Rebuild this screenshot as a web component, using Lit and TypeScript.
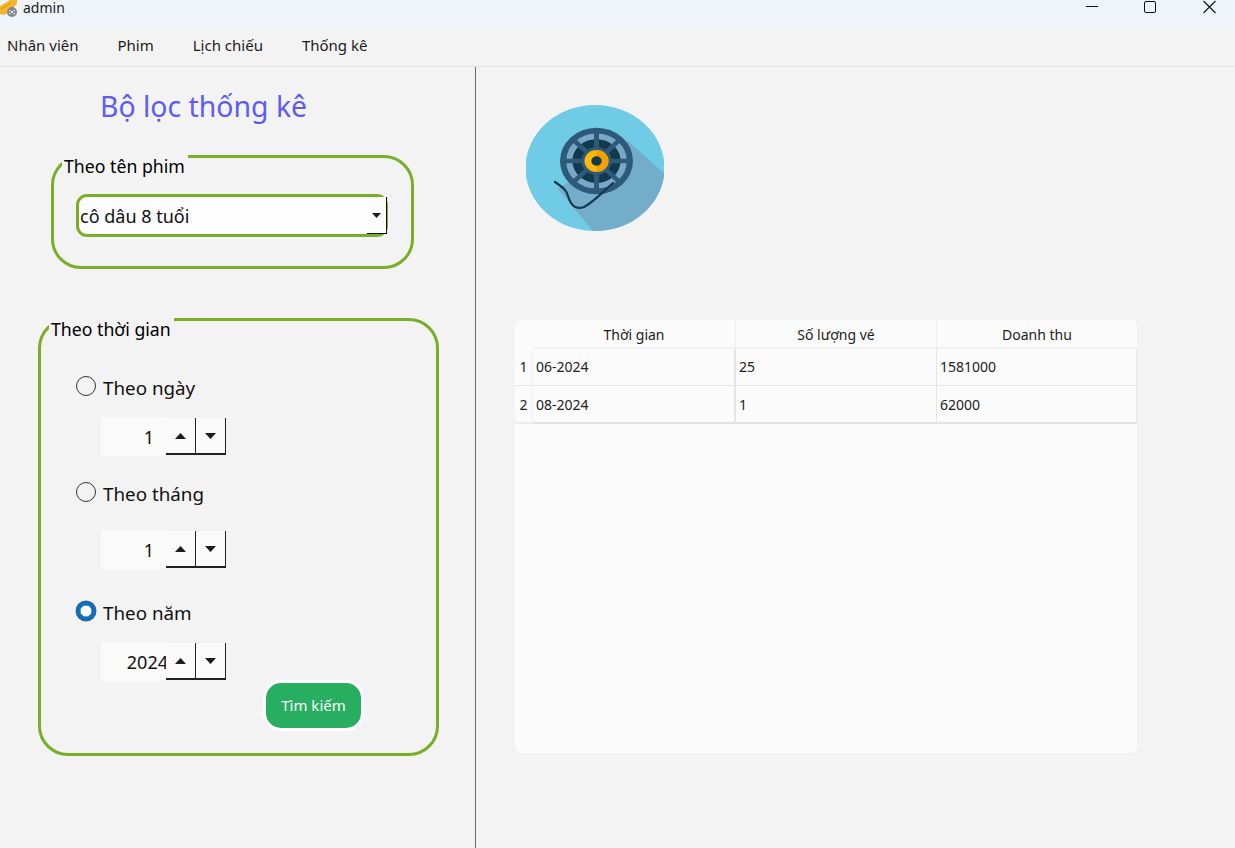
import { LitElement, html, css, svg } from "lit";
import { customElement } from "lit/decorators.js";

const spokes = [0, 45, 90, 135].map(
  (a) => svg`<line x1="-33" y1="0" x2="33" y2="0" stroke="#2d5a78" stroke-width="5" transform="rotate(${a + 0})"/>`
);

const reelIcon = html`<svg class="reel" viewBox="0 0 138 126" width="138" height="126">
  <defs>
    <clipPath id="disc"><ellipse cx="69" cy="63" rx="69.5" ry="63"/></clipPath>
  </defs>
  <ellipse cx="69" cy="63" rx="69.5" ry="63" fill="#6fcbe6"/>
  <polygon clip-path="url(#disc)" points="102,36 140,70 140,126 67,126 32,84" fill="#74adca"/>
  <g transform="translate(70.5,56) scale(1,0.91)">
    <circle r="36.5" fill="#2d5a78"/>
    <circle r="27" fill="none" stroke="#79a8c6" stroke-width="6.6"/>
    <circle r="19.5" fill="none" stroke="#12394d" stroke-width="9"/>
    ${spokes}
    <circle r="15" fill="#2d5a78"/>
    <circle r="12" fill="#ffb80c"/>
    <path d="M0,-12 A12,12 0 0 1 0,12 Z" fill="#f3a000"/>
    <circle r="5.2" fill="#12394d"/>
  </g>
  <path d="M29,77 C36,82 40,84 42,91 C45,101 50,105 58,102 C66,98 78,86 87,78" fill="none" stroke="#12394d" stroke-width="2.2" stroke-linecap="round"/>
</svg>`;

const appIcon = html`<svg class="app-icon" viewBox="0 0 18 18" width="18" height="18">
  <path d="M0,6 L10,0 L17,0 L17,4 L9,12 L4,15 L0,14 Z" fill="#f7b52e"/>
  <path d="M1,9 L11,3" stroke="#e09a1a" stroke-width="1.3"/>
  <circle cx="12" cy="12" r="5" fill="#7c868b"/>
  <circle cx="12" cy="12" r="1.2" fill="#d6dcde"/>
  <circle cx="9.8" cy="10.6" r="0.9" fill="#d6dcde"/>
  <circle cx="14.2" cy="10.6" r="0.9" fill="#d6dcde"/>
  <circle cx="9.8" cy="13.6" r="0.9" fill="#d6dcde"/>
  <circle cx="14.2" cy="13.6" r="0.9" fill="#d6dcde"/>
</svg>`;

@customElement("app-root")
export class AppRoot extends LitElement {
  static styles = css`
    :host {
      display: block;
      width: 1235px;
      height: 848px;
      overflow: hidden;
      background: #f3f3f3;
      font-family: "Noto Sans", "Open Sans", sans-serif;
      color: #111;
    }
    .titlebar {
      height: 26px;
      background: #eff4fb;
      display: flex;
      align-items: flex-start;
      font-size: 14px;
      line-height: 16px;
    }
    .app-icon { display: block; flex: none; }
    .app-name { margin-left: 5px; color: #1a1a1a; }
    .win {
      margin-left: auto;
      display: flex;
    }
    .win svg { display: block; }
    .win .min { margin-right: 46px; }
    .win .max { margin-right: 47px; }
    .win .close { margin-right: 19px; }
    .menubar {
      box-sizing: border-box;
      border-bottom: 1px solid #e2e2ea;
      height: 41px;
      display: flex;
      align-items: center;
      font-size: 15px;
      color: #1b1b1b;
      padding: 0 0 2px 7px;
    }
    .menubar span { margin-right: 39px; }
    .main { display: flex; height: 781px; }
    .left {
      width: 476px;
      box-sizing: border-box;
      border-right: 1px solid #6a6a6a;
      flex: none;
    }
    .heading {
      margin: 20px 0 0 100px;
      height: 40px;
      line-height: 38px;
      font-size: 28.4px;
      font-weight: 400;
      color: #5e5cf6;
    }
    .group {
      box-sizing: border-box;
      border: 3px solid #79ae28;
      border-radius: 30px;
    }
    .g1 { margin: 28px 0 0 51px; width: 363px; height: 114px; }
    .g2 { margin: 49px 0 0 38px; width: 401px; height: 438px; }
    .legend {
      width: fit-content;
      height: 24px;
      margin: -4px 0 0 8px;
      padding: 0 3px 0 2px;
      background: #f3f3f3;
      font-size: 17.7px;
      line-height: 24px;
      color: #000;
    }
    .combo {
      box-sizing: border-box;
      margin: 16px 0 0 22px;
      width: 312px;
      height: 43px;
      border: 3px solid #79ae28;
      border-radius: 11px;
      background: #fdfdfd;
      display: flex;
      align-items: center;
      font-size: 18px;
      padding-left: 1px;
    }
    .combo .arrowbox {
      margin-left: auto;
      align-self: stretch;
      width: 20px;
      margin-right: -2px;
      box-sizing: border-box;
      border-right: 1.5px solid #111;
      border-bottom: 1.5px solid #111;
      background: #fdfdfd;
      display: flex;
      align-items: center;
      justify-content: center;
    }
    .radio {
      display: flex;
      align-items: center;
      height: 24px;
      margin-left: 35px;
      font-size: 18.8px;
      color: #111;
    }
    .radio .lbl { padding-top: 3px; }
    .dot {
      box-sizing: border-box;
      width: 20px;
      height: 20px;
      border-radius: 50%;
      border: 1.5px solid #333;
      margin-right: 7px;
      flex: none;
    }
    .dot.on {
      border: 4.5px solid #0b6fc2;
      background: #fff;
      box-shadow: inset 0 0 0 0.5px #0b4f88, 0 0 0 0.5px #666;
    }
    .r1 { margin-top: 33px; }
    .r2 { margin-top: 24px; }
    .r3 { margin-top: 30px; }
    .spin {
      display: flex;
      width: 125px;
      height: 39px;
      margin: 19px 0 0 60px;
      font-size: 18px;
    }
    .s2 { margin-top: 26px; }
    .field {
      width: 65px;
      box-sizing: border-box;
      background: #fafafa;
      display: flex;
      align-items: center;
      justify-content: flex-end;
      padding-right: 12px;
      flex: none;
      white-space: nowrap;
    }
    .field.wide { padding-right: 0; }
    .field.wide span { margin-right: -2px; }
    .sbtn {
      width: 30px;
      box-sizing: border-box;
      margin: 1px 0;
      border-right: 1px solid #222;
      border-bottom: 2px solid #222;
      background: #fafafa;
      display: flex;
      align-items: center;
      justify-content: center;
      flex: none;
    }
    .search {
      box-sizing: border-box;
      display: flex;
      align-items: center;
      justify-content: center;
      margin: -1px 0 0 222px;
      width: 101px;
      height: 51px;
      border: 3px solid #fff;
      border-radius: 18px;
      background: #27ae60;
      color: #fff;
      font-size: 15px;
      padding-bottom: 2px;
    }
    .right { flex: 1; }
    .reel { display: block; margin: 38px 0 0 50px; }
    .table {
      margin: 89px 0 0 39px;
      width: 622px;
      height: 433px;
      box-sizing: border-box;
      background: #fbfbfb;
      border-radius: 6px;
      display: grid;
      grid-template-columns: 18px 203px 201px 200px;
      grid-template-rows: 29px 37px 38px;
      align-content: start;
      font-size: 14px;
      color: #222;
    }
    .table > div { box-sizing: border-box; display: flex; align-items: center; }
    .th {
      justify-content: center;
      padding-top: 1px;
      border-right: 1px solid #f0f0f0;
      border-bottom: 2px solid #f1f1f1;
      color: #1c1c1c;
    }
    .th.corner { border-right: none; border-bottom: none; }
    .th.last { border-right: none; }
    .rh {
      justify-content: center;
      padding-bottom: 1px;
      border-bottom: 1px solid #e4e4e4;
      border-right: 1px solid #f0f0f0;
    }
    .td {
      padding: 0 0 2px 3px;
      border-bottom: 1px solid #e4e4e4;
      border-right: 1px solid #e6e6e6;
    }
    .td.mid { border-right: 2px solid #e6e6e6; }
    .bottom.rh, .bottom.td { border-bottom: 2px solid #e2e2e2; padding-top: 1px; padding-bottom: 0; }
    .rh.bottom { border-bottom-color: #ececec; }
  `;

  private tri(up: boolean, w = 11, h = 6) {
    return html`<svg width=${w} height=${h} viewBox="0 0 14 7" preserveAspectRatio="none">
      <path d=${up ? "M7,0 L14,7 L0,7 Z" : "M0,0 L14,0 L7,7 Z"} fill="#1c1c1c" />
    </svg>`;
  }

  private spinbox(cls: string, value: string, wide = false) {
    return html`<div class="spin ${cls}">
      <div class="field ${wide ? "wide" : ""}"><span>${value}</span></div>
      <div class="sbtn">${this.tri(true)}</div>
      <div class="sbtn">${this.tri(false)}</div>
    </div>`;
  }

  private row(n: string, time: string, qty: string, total: string, bottom = false) {
    const b = bottom ? "bottom" : "";
    return html`<div class="rh ${b}">${n}</div>
      <div class="td mid ${b}">${time}</div>
      <div class="td ${b}">${qty}</div>
      <div class="td ${b}">${total}</div>`;
  }

  render() {
    return html`
      <div class="titlebar">
        ${appIcon}
        <span class="app-name">admin</span>
        <div class="win">
          <svg class="min" width="12" height="12" viewBox="0 0 12 12"><line x1="0" y1="6.5" x2="12" y2="6.5" stroke="#111" stroke-width="1"/></svg>
          <svg class="max" width="12" height="13" viewBox="0 0 12 13"><rect x="0.5" y="1.5" width="11" height="11" rx="1.5" fill="none" stroke="#111" stroke-width="1"/></svg>
          <svg class="close" width="13" height="14" viewBox="0 0 13 14"><path d="M0.5,1 L12.5,13 M12.5,1 L0.5,13" stroke="#111" stroke-width="1.1" fill="none"/></svg>
        </div>
      </div>
      <div class="menubar">
        <span>Nhân viên</span><span>Phim</span><span>Lịch chiếu</span><span>Thống kê</span>
      </div>
      <div class="main">
        <div class="left">
          <div class="heading">Bộ lọc thống kê</div>
          <div class="group g1">
            <div class="legend">Theo tên phim</div>
            <div class="combo">
              <span>cô dâu 8 tuổi</span>
              <div class="arrowbox">${this.tri(false, 9, 5)}</div>
            </div>
          </div>
          <div class="group g2">
            <div class="legend">Theo thời gian</div>
            <div class="radio r1"><span class="dot"></span><span class="lbl">Theo ngày</span></div>
            ${this.spinbox("s1", "1")}
            <div class="radio r2"><span class="dot"></span><span class="lbl">Theo tháng</span></div>
            ${this.spinbox("s2", "1")}
            <div class="radio r3"><span class="dot on"></span><span class="lbl">Theo năm</span></div>
            ${this.spinbox("s3", "2024", true)}
            <div class="search">Tìm kiếm</div>
          </div>
        </div>
        <div class="right">
          ${reelIcon}
          <div class="table">
            <div class="th corner"></div>
            <div class="th">Thời gian</div>
            <div class="th">Số lượng vé</div>
            <div class="th last">Doanh thu</div>
            ${this.row("1", "06-2024", "25", "1581000")}
            ${this.row("2", "08-2024", "1", "62000", true)}
          </div>
        </div>
      </div>
    `;
  }
}
